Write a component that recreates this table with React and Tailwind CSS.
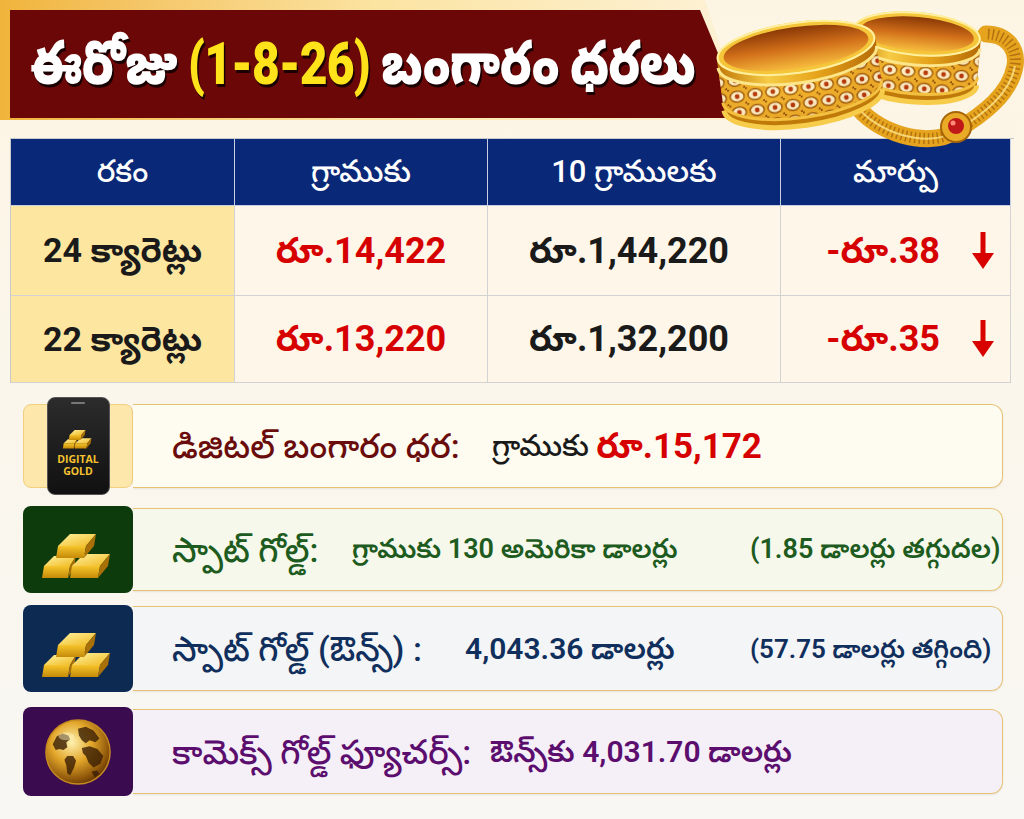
import React from 'react';

const FONT = { fontFamily: 'Roboto, "Noto Sans Telugu", "Noto Sans", sans-serif' };

function DownArrow() {
  return (
    <svg width="26" height="38" viewBox="0 0 26 38">
      <rect x="10.5" y="0" width="5" height="24" fill="#d90000" />
      <polygon points="2,21 24,21 13,37" fill="#d90000" />
    </svg>
  );
}

function Bangle({ cx, cy, rx, ry, h, rot }) {
  return (
    <g transform={`rotate(${rot} ${cx} ${cy})`}>
      <ellipse cx={cx} cy={cy + h} rx={rx} ry={ry} fill="#c07a0a" />
      <rect x={cx - rx} y={cy} width={rx * 2} height={h} fill="url(#bodyA)" />
      <path
        d={`M${cx - rx} ${cy + 10} A ${rx} ${ry} 0 0 0 ${cx + rx} ${cy + 10} L ${cx + rx} ${cy + h - 8} A ${rx} ${ry} 0 0 1 ${cx - rx} ${cy + h - 8} Z`}
        fill="url(#gLace)"
        opacity="0.9"
      />
      <path d={`M${cx - rx} ${cy + h} A ${rx} ${ry} 0 0 0 ${cx + rx} ${cy + h}`} fill="none" stroke="#f7cc4a" strokeWidth="5" />
      <path d={`M${cx - rx} ${cy + 9} A ${rx} ${ry} 0 0 0 ${cx + rx} ${cy + 9}`} fill="none" stroke="#fde58a" strokeWidth="3" />
      <path d={`M${cx - rx} ${cy + h - 8} A ${rx} ${ry} 0 0 0 ${cx + rx} ${cy + h - 8}`} fill="none" stroke="#f3c040" strokeWidth="3" />
      <ellipse cx={cx} cy={cy} rx={rx} ry={ry} fill="#f5c53a" />
      <ellipse cx={cx} cy={cy} rx={rx - 7} ry={ry - 5} fill="url(#gIn)" />
      <ellipse cx={cx} cy={cy} rx={rx - 1} ry={ry - 1} fill="none" stroke="#fff0a0" strokeWidth="2" />
    </g>
  );
}

function Jewelry() {
  return (
    <svg width="320" height="150" viewBox="0 0 320 150" className="absolute right-0 top-0">
      <defs>
        <linearGradient id="bodyA" x1="0" y1="0" x2="1" y2="0">
          <stop offset="0" stopColor="#c27a0a" />
          <stop offset="0.3" stopColor="#f6cb45" />
          <stop offset="0.6" stopColor="#e7a51c" />
          <stop offset="1" stopColor="#b56a06" />
        </linearGradient>
        <linearGradient id="gIn" x1="0" y1="0" x2="0" y2="1">
          <stop offset="0" stopColor="#8a3806" />
          <stop offset="0.5" stopColor="#d2701a" />
          <stop offset="1" stopColor="#f7bd3e" />
        </linearGradient>
        <pattern id="gLace" width="18" height="16" patternUnits="userSpaceOnUse">
          <rect width="18" height="16" fill="#eeae2c" />
          <ellipse cx="9" cy="8" rx="7" ry="5.5" fill="#fff3d0" stroke="#9a5406" strokeWidth="1.4" />
          <circle cx="9" cy="8" r="2.4" fill="#b3300c" />
          <circle cx="0" cy="0" r="2" fill="#7a3a04" />
          <circle cx="18" cy="16" r="2" fill="#7a3a04" />
        </pattern>
      </defs>
      {/* necklace */}
      <path d="M150 102 C170 134 225 148 250 132 C280 114 306 94 311 66 C314 48 302 34 282 34"
        fill="none" stroke="#e5a31e" strokeWidth="17" strokeLinecap="round" />
      <path d="M150 102 C170 134 225 148 250 132 C280 114 306 94 311 66 C314 48 302 34 282 34"
        fill="none" stroke="#8a4a05" strokeWidth="11" strokeDasharray="1.5 3" opacity="0.55" />
      <path d="M150 102 C170 134 225 148 250 132 C280 114 306 94 311 66"
        fill="none" stroke="#fde48a" strokeWidth="2" opacity="0.8" />
      <circle cx="252" cy="127" r="15" fill="#e9ab27" stroke="#a56508" strokeWidth="2" />
      <circle cx="252" cy="126" r="8" fill="#c01818" />
      <circle cx="249" cy="123" r="2.5" fill="#ff8a7a" />
      <Bangle cx={213} cy={34} rx={64} ry={22} h={46} rot={5} />
      <Bangle cx={92} cy={48} rx={80} ry={26} h={52} rot={-8} />
    </svg>
  );
}

function GoldBars({ id, w = 76 }) {
  return (
    <svg width={w} height={(w * 60) / 76} viewBox="0 0 76 60">
      <defs>
        <linearGradient id={`top${id}`} x1="0" y1="0" x2="1" y2="1">
          <stop offset="0" stopColor="#fff3a0" />
          <stop offset="1" stopColor="#f0b820" />
        </linearGradient>
        <linearGradient id={`side${id}`} x1="0" y1="0" x2="0" y2="1">
          <stop offset="0" stopColor="#f6c52c" />
          <stop offset="1" stopColor="#c58a08" />
        </linearGradient>
      </defs>
      <polygon points="4,46 14,36 36,36 30,46" fill={`url(#top${id})`} />
      <polygon points="4,46 30,46 28,58 2,58" fill={`url(#side${id})`} />
      <polygon points="30,46 36,36 34,48 28,58" fill="#a87006" />
      <polygon points="32,46 44,34 70,34 60,46" fill={`url(#top${id})`} />
      <polygon points="32,46 60,46 58,58 30,58" fill={`url(#side${id})`} />
      <polygon points="60,46 70,34 68,46 58,58" fill="#a87006" />
      <polygon points="18,26 30,14 56,14 46,26" fill={`url(#top${id})`} />
      <polygon points="18,26 46,26 44,38 16,38" fill={`url(#side${id})`} />
      <polygon points="46,26 56,14 54,26 44,38" fill="#a87006" />
    </svg>
  );
}

function Globe() {
  return (
    <svg width="70" height="70" viewBox="0 0 72 72">
      <defs>
        <radialGradient id="globeG" cx="0.4" cy="0.35" r="0.7">
          <stop offset="0" stopColor="#fff2b0" />
          <stop offset="0.45" stopColor="#e2a62a" />
          <stop offset="0.85" stopColor="#8a5208" />
          <stop offset="1" stopColor="#5a3204" />
        </radialGradient>
      </defs>
      <circle cx="36" cy="36" r="33" fill="url(#globeG)" stroke="#c58a20" strokeWidth="1.5" />
      <path d="M10 28 L14 20 L20 17 L26 19 L28 23 L24 26 L25 31 L21 34 L17 33 L13 34 Z" fill="#3a1e04" opacity="0.8" />
      <path d="M25 40 L31 40 L34 45 L32 52 L28 60 L25 58 L24 50 L22 44 Z" fill="#3a1e04" opacity="0.8" />
      <path d="M36 12 L44 10 L52 14 L58 22 L54 26 L48 24 L44 27 L40 24 L37 19 Z" fill="#3a1e04" opacity="0.8" />
      <path d="M40 32 L48 30 L56 33 L62 40 L59 48 L52 52 L47 47 L44 40 L41 37 Z" fill="#3a1e04" opacity="0.8" />
      <path d="M50 56 L56 55 L58 59 L53 62 Z" fill="#3a1e04" opacity="0.8" />
      <ellipse cx="24" cy="20" rx="8" ry="4" fill="#fff6c8" opacity="0.45" />
    </svg>
  );
}

function Phone() {
  return (
    <div className="flex h-[98px] w-[63px] flex-col items-center rounded-lg border border-[#555] bg-gradient-to-b from-[#2c2c2c] to-[#111] pt-[4px]">
      <div className="h-[2px] w-[14px] rounded bg-[#777]" />
      <div className="mt-[20px]">
        <GoldBars id="p" w={32} />
      </div>
      <div className="mt-[4px] text-center text-[10.5px] font-bold leading-[12px] text-[#f5c230]" style={{ fontFamily: '"Open Sans", sans-serif' }}>
        DIGITAL
        <br />
        GOLD
      </div>
    </div>
  );
}

const rows = [
  { k: '24 క్యారెట్లు', g: 'రూ.14,422', t: 'రూ.1,44,220', c: '-రూ.38' },
  { k: '22 క్యారెట్లు', g: 'రూ.13,220', t: 'రూ.1,32,200', c: '-రూ.35' },
];

const cards = [
  {
    icon: (
      <div className="flex h-[84px] w-[110px] shrink-0 items-center justify-center rounded-lg border border-[#f2cf7e] bg-[#fde7ab]">
        <Phone />
      </div>
    ),
    bg: 'bg-[#fefcf1]',
    row: 'mt-[21px] h-[84px]',
    parts: [
      { t: 'డిజిటల్ బంగారం ధర:', c: 'w-[320px] text-[#6a0c0c] text-[34px] font-medium' },
      { t: 'గ్రాముకు ', c: 'text-[#1a1a1a] text-[30px] font-medium' },
      { t: 'రూ.15,172', c: 'text-[#d60000] text-[35px] font-bold' },
    ],
  },
  {
    icon: (
      <div className="-my-[2px] flex h-[87px] w-[110px] shrink-0 items-center justify-center rounded-lg bg-[#0e3b0c]">
        <GoldBars id="a" />
      </div>
    ),
    bg: 'bg-[#f5f8ea]',
    row: 'mt-[20px] h-[83px]',
    parts: [
      { t: 'స్పాట్ గోల్డ్:', c: 'w-[180px] text-[#1e5b1e] text-[34px] font-medium' },
      { t: 'గ్రాముకు 130 అమెరికా డాలర్లు', c: 'w-[398px] text-[#1e5b1e] text-[27px] font-semibold' },
      { t: '(1.85 డాలర్లు తగ్గుదల)', c: 'text-[#1e5b1e] text-[27px] font-semibold' },
    ],
  },
  {
    icon: (
      <div className="-my-[1px] flex h-[87px] w-[110px] shrink-0 items-center justify-center rounded-lg bg-[#0c2a52]">
        <GoldBars id="b" />
      </div>
    ),
    bg: 'bg-[#f3f5f6]',
    row: 'mt-[15px] h-[85px]',
    parts: [
      { t: 'స్పాట్ గోల్డ్ (ఔన్స్) :', c: 'w-[293px] text-[#102f5c] text-[34px] font-medium' },
      { t: '4,043.36 డాలర్లు', c: 'w-[285px] text-[#102f5c] text-[30px] font-semibold' },
      { t: '(57.75 డాలర్లు తగ్గింది)', c: 'text-[#102f5c] text-[26px] font-semibold' },
    ],
  },
  {
    icon: (
      <div className="-my-[2px] flex h-[89px] w-[110px] shrink-0 items-center justify-center rounded-lg bg-[#3a0b4e]">
        <Globe />
      </div>
    ),
    bg: 'bg-[#f5f0f8]',
    row: 'mt-[18px] h-[85px]',
    parts: [
      { t: 'కామెక్స్ గోల్డ్ ఫ్యూచర్స్:', c: 'w-[318px] text-[#5c0e6e] text-[34px] font-medium' },
      { t: 'ఔన్స్‌కు 4,031.70 డాలర్లు', c: 'text-[#5c0e6e] text-[30px] font-semibold' },
    ],
  },
];

export default function App() {
  return (
    <div className="h-[819px] w-[1024px] overflow-hidden bg-gradient-to-b from-[#fdf5e4] to-[#f8f7f3]" style={FONT}>
      {/* Banner */}
      <div className="relative h-[130px]">
        <div className="h-[120px] w-[745px] bg-gradient-to-r from-[#f0b43a] via-[#fbe3a0] to-[#fdf2d8] pl-[10px] pt-[10px] [clip-path:polygon(0_0,705px_0,745px_100%,0_100%)]">
          <div className="flex h-[108px] items-center overflow-hidden bg-[#6b0707] pl-[20px] [clip-path:polygon(0_0,690px_0,735px_100%,0_100%)]">
            <h1 className="origin-left scale-x-[0.8] whitespace-nowrap text-[60px] font-black leading-none tracking-[-1px] text-white [text-shadow:2px_3px_0_#1a0000]">
              ఈరోజు <span className="text-[#ffe31a]">(1-8-26)</span> బంగారం ధరలు
            </h1>
          </div>
        </div>
        <Jewelry />
      </div>

      {/* Rates table */}
      <div className="mx-[10px] mt-[8px] grid grid-cols-[224px_253px_293px_230px] border-l border-t border-[#c9c9c9]">
        {['రకం', 'గ్రాముకు', '10 గ్రాములకు', 'మార్పు'].map((h) => (
          <div key={h} className="flex h-[67px] items-center justify-center border-r border-b border-[#c9cfe0] bg-[#0a2878] text-[31px] font-medium text-white">
            {h}
          </div>
        ))}
        {rows.map((r, i) => (
          <React.Fragment key={r.k}>
            <div className={`flex ${i === 0 ? 'h-[90px]' : 'h-[87px]'} items-center justify-center border-r border-b border-[#d2d2d2] bg-[#fde6a0] text-[34px] font-bold text-[#1a1a1a]`}>
              {r.k}
            </div>
            <div className="flex items-center justify-center border-r border-b border-[#d2d2d2] bg-[#fdf6e9] text-[36px] font-bold text-[#d60000]">
              {r.g}
            </div>
            <div className="flex items-center justify-center border-r border-b border-[#d2d2d2] bg-[#fdf6e9] pr-[10px] text-[36px] font-bold text-[#1a1a1a]">
              {r.t}
            </div>
            <div className="flex items-center justify-end gap-[30px] border-r border-b border-[#d2d2d2] bg-[#fdf6e9] pr-[14px] text-[36px] font-bold text-[#d60000]">
              {r.c}
              <DownArrow />
            </div>
          </React.Fragment>
        ))}
      </div>

      {/* Info cards */}
      <div className="flex flex-col pl-[23px] pr-[21px]">
        {cards.map((c, i) => (
          <div key={i} className={`flex items-center ${c.row}`}>
            {c.icon}
            <div className={`flex h-full flex-1 items-center rounded-r-xl border border-l-0 border-[#e8c274] ${c.bg} pl-[39px] shadow-[0_1px_2px_rgba(0,0,0,0.08)]`}>
              {c.parts.map((p, j) => (
                <span key={j} className={`whitespace-pre leading-none ${p.c}`}>
                  {p.t}
                </span>
              ))}
            </div>
          </div>
        ))}
      </div>
    </div>
  );
}
